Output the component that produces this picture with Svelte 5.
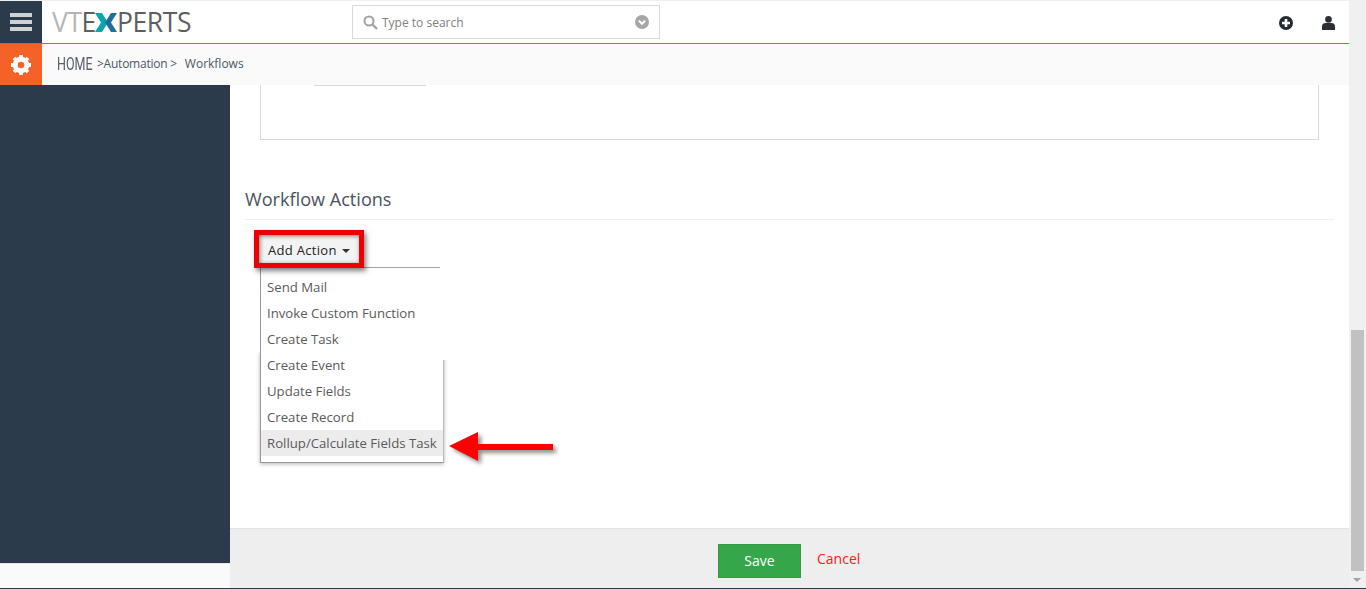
<script>
	const items = ['Create Event', 'Update Fields', 'Create Record', 'Rollup/Calculate Fields Task'];
	const topItems = ['Send Mail', 'Invoke Custom Function', 'Create Task'];
</script>

<div class="page">
	<div class="shell">
		<div class="app">
			<header class="topbar">
				<button class="burger" aria-label="Menu">
					<span></span><span></span><span></span>
				</button>
				<div class="logo">
					<span class="vt">VT</span><span>E</span>
					<svg class="logo-x" width="22" height="19" viewBox="0 0 22 19" aria-hidden="true">
						<path d="M0 0h7l6 9.500-6 9.500H0l6-9.500z" fill="#0aa5ad" />
						<path d="M22 0h-6l-6 9.500 6 9.500h6l-6-9.500z" fill="#1d6f9c" />
					</svg>
					<span>PERTS</span>
				</div>
				<div class="search">
					<svg width="15" height="15" viewBox="0 0 15 15" aria-hidden="true">
						<circle cx="6" cy="6" r="4.500" fill="none" stroke="#a3a3a3" stroke-width="2" />
						<path d="M9.500 9.500L14 14" stroke="#a3a3a3" stroke-width="2.400" />
					</svg>
					<span class="placeholder">Type to search</span>
					<svg width="14" height="14" viewBox="0 0 14 14" aria-hidden="true">
						<circle cx="7" cy="7" r="7" fill="#a6a6a6" />
						<path d="M3.800 5.600L7 8.800l3.200-3.200" fill="none" stroke="#fff" stroke-width="2" />
					</svg>
				</div>
				<div class="top-icons">
					<svg width="14" height="14" viewBox="0 0 14 14" aria-hidden="true">
						<circle cx="7" cy="7" r="7" fill="#222b33" />
						<path d="M7 3v8M3 7h8" stroke="#fff" stroke-width="2.600" />
					</svg>
					<svg width="13" height="14" viewBox="0 0 13 14" aria-hidden="true">
						<circle cx="6.500" cy="3.400" r="3.300" fill="#2c2f33" />
						<path d="M0 14v-3.500C0 8 1.600 7 3.500 7h6C11.400 7 13 8 13 10.500V14z" fill="#2c2f33" />
					</svg>
				</div>
			</header>

			<div class="crumbs">
				<div class="gear">
					<svg width="22" height="22" viewBox="0 0 22 22" aria-hidden="true">
						<circle cx="11" cy="11" r="5.800" fill="none" stroke="#fff" stroke-width="5" />
						<path d="M11 1v4M11 17v4M1 11h4M17 11h4M4 4l3 3M15 15l3 3M18 4l-3 3M7 15l-3 3" stroke="#fff" stroke-width="3.800" />
					</svg>
				</div>
				<span class="home">HOME</span>
				<span class="trail">&gt;Automation &gt;</span>
				<span class="trail last">Workflows</span>
			</div>

			<div class="body">
				<aside class="sidebar">
					<div class="side-fill"></div>
					<div class="side-foot"></div>
				</aside>

				<main class="content">
					<div class="scroll-area">
						<div class="panel">
							<div class="stub"></div>
						</div>
						<h2>Workflow Actions</h2>
						<div class="actions">
							<button class="add">Add Action <i class="caret"></i></button>
							<ul class="menu upper">
								{#each topItems as t}
									<li>{t}</li>
								{/each}
							</ul>
							<ul class="menu lower">
								{#each items as t, i}
									<li class:active={i === 3}>{t}</li>
								{/each}
							</ul>
							<svg class="arrow" width="118" height="44" viewBox="0 0 118 44" aria-hidden="true">
								<path d="M1 15L30 1v12h75v6H30v11z" fill="#ff0000" />
							</svg>
						</div>
					</div>
					<footer class="savebar">
						<button class="save">Save</button>
						<span class="cancel">Cancel</span>
					</footer>
				</main>
			</div>
		</div>

		<div class="scrollbar">
			<div class="thumb"></div>
			<i class="down"></i>
		</div>
	</div>
	<div class="edge"></div>
</div>

<style>
	:global(body) {
		margin: 0;
	}

	.page {
		width: 1366px;
		height: 589px;
		display: flex;
		flex-direction: column;
		overflow: hidden;
		font-family: 'Open Sans', sans-serif;
		background: #f0f0f0;
	}

	.shell {
		flex: 1;
		display: flex;
		min-height: 0;
	}

	.app {
		flex: 1;
		min-width: 0;
		display: flex;
		flex-direction: column;
	}

	.topbar {
		height: 43px;
		margin-top: 1px;
		flex: none;
		box-sizing: border-box;
		display: flex;
		align-items: center;
		border-bottom: 1px solid #e25c33;
		background: #fff;
	}

	.burger {
		width: 42px;
		height: 42px;
		flex: none;
		background: #2c3b4b;
		border: 0;
		padding: 0 10px;
		display: flex;
		flex-direction: column;
		justify-content: center;
		gap: 3px;
		align-self: flex-start;
	}

	.burger span {
		display: block;
		height: 4px;
		background: #ced2d6;
	}

	.logo {
		width: 300px;
		flex: none;
		margin-left: 10px;
		display: flex;
		align-items: center;
		font-weight: 400;
		font-size: 26.500px;
		letter-spacing: -0.4px;
		color: #5d5f61;
	}

	.logo .vt {
		color: #b4b6b8;
	}

	.logo-x {
		margin: 0 0 0 -1px;
	}

	.search {
		width: 308px;
		height: 34px;
		flex: none;
		box-sizing: border-box;
		border: 1px solid #d9d9d9;
		display: flex;
		align-items: center;
		gap: 4px;
		padding: 0 10px;
		color: #808080;
		font-size: 12px;
	}

	.placeholder {
		flex: 1;
	}

	.top-icons {
		margin: 1px 14px 0 auto;
		display: flex;
		align-items: center;
		gap: 29px;
	}

	.crumbs {
		height: 41px;
		flex: none;
		display: flex;
		align-items: center;
		background: #fafafa;
		color: #4a5868;
		font-size: 12px;
		padding-bottom: 3px;
		box-sizing: border-box;
	}

	.gear {
		width: 42px;
		height: 41px;
		flex: none;
		margin-bottom: -3px;
		background: #f56228;
		display: flex;
		align-items: center;
		justify-content: center;
	}

	.home {
		display: inline-block;
		width: 40px;
		margin-left: 15px;
		font-family: 'Roboto', sans-serif;
		font-size: 19px;
		color: #57606e;
		transform: scaleX(0.66);
		transform-origin: left center;
	}

	.trail {
		white-space: pre;
		letter-spacing: -0.02em;
	}

	.last {
		margin-left: 8px;
		letter-spacing: 0;
	}

	.body {
		flex: 1;
		display: flex;
		min-height: 0;
	}

	.sidebar {
		width: 230px;
		flex: none;
		display: flex;
		flex-direction: column;
	}

	.side-fill {
		flex: 1;
		background: #2c3b4b;
	}

	.side-foot {
		height: 25px;
		box-sizing: border-box;
		background: #fafafa;
		border-top: 1px solid #e8e8e8;
	}

	.content {
		flex: 1;
		display: flex;
		flex-direction: column;
		min-width: 0;
	}

	.scroll-area {
		flex: 1;
		padding: 0 15px;
		background: #fff;
	}

	.panel {
		height: 55px;
		width: 1059px;
		margin: 0 15px;
		border: 1px solid #d8d8d8;
		border-top: 0;
		box-sizing: border-box;
	}

	.stub {
		width: 112px;
		margin-left: 53px;
		border-top: 1px solid #d8d8d8;
	}

	h2 {
		margin: 47px 0 0;
		height: 32px;
		width: 1089px;
		border-bottom: 1px solid #eeeeee;
		font-size: 18.100px;
		font-weight: 400;
		line-height: 24px;
		color: #4a5260;
	}

	.actions {
		position: relative;
		padding: 10px 0 0 9px;
	}

	.add {
		display: block;
		position: relative;
		z-index: 1;
		width: 110px;
		height: 38px;
		margin-bottom: -1px;
		padding: 1px 0 0 9px;
		text-align: left;
		background: #f3f3f3;
		border: 5px solid #ee0000;
		box-sizing: border-box;
		box-shadow: 2px 3px 5px rgba(0, 0, 0, 0.5), inset 1px 1px 4px rgba(0, 0, 0, 0.5);
		font: 500 13px 'Open Sans', sans-serif;
		letter-spacing: 0.3px;
		color: #222;
	}

	.caret {
		display: inline-block;
		margin-left: 2px;
		vertical-align: 2px;
		border: 4px solid transparent;
		border-top-color: #333;
		border-bottom: 0;
	}

	.menu {
		list-style: none;
		margin: 0 0 0 6px;
		padding: 0;
		font-size: 13.200px;
		color: #5a5a5a;
		border-left: 1px solid #999;
	}

	.menu li {
		height: 26px;
		line-height: 26px;
		padding-left: 6px;
	}

	.upper {
		width: 179px;
		border-top: 1px solid #a5a5a5;
		padding-top: 6px;
	}

	.lower {
		position: relative;
		width: 184px;
		box-sizing: border-box;
		padding-bottom: 6px;
		border-right: 1px solid #bbb;
		border-bottom: 1px solid #999;
		box-shadow: 0 1px 4px rgba(0, 0, 0, 0.3);
		clip-path: inset(0 -6px -6px -6px);
	}

	/* hides the top of the box shadow on the right, as in the marked-up screenshot */
	.lower::before {
		content: '';
		position: absolute;
		top: 0;
		left: 0;
		right: -7px;
		height: 8px;
		background: #fff;
	}

	.menu li.active {
		background: #ececec;
	}

	.arrow {
		position: absolute;
		left: 203px;
		top: 211px;
		filter: drop-shadow(3px 3px 2px rgba(0, 0, 0, 0.45));
	}

	.savebar {
		height: 60px;
		flex: none;
		box-sizing: border-box;
		background: #eeeeee;
		border-top: 1px solid #e2e2e2;
		display: flex;
		align-items: flex-start;
		padding: 15px 0 0 488px;
	}

	.save {
		width: 83px;
		height: 34px;
		padding: 0 0 2px;
		border: 1px solid #359a48;
		background: #36a64b;
		color: #fff;
		font: 400 14px 'Open Sans', sans-serif;
	}

	.cancel {
		margin: 5px 0 0 16px;
		font-size: 14px;
		color: #f5221b;
	}

	.scrollbar {
		width: 17px;
		flex: none;
		background: #f0f0f0;
		position: relative;
	}

	.thumb {
		position: absolute;
		left: 2px;
		top: 330px;
		width: 13px;
		height: 241px;
		background: #c1c1c1;
	}

	.down {
		position: absolute;
		left: 4px;
		bottom: 6px;
		border: 4px solid transparent;
		border-top-color: #a3a3a3;
		border-bottom: 0;
	}

	.edge {
		height: 1px;
		flex: none;
		background: #2c3b4b;
	}
</style>
